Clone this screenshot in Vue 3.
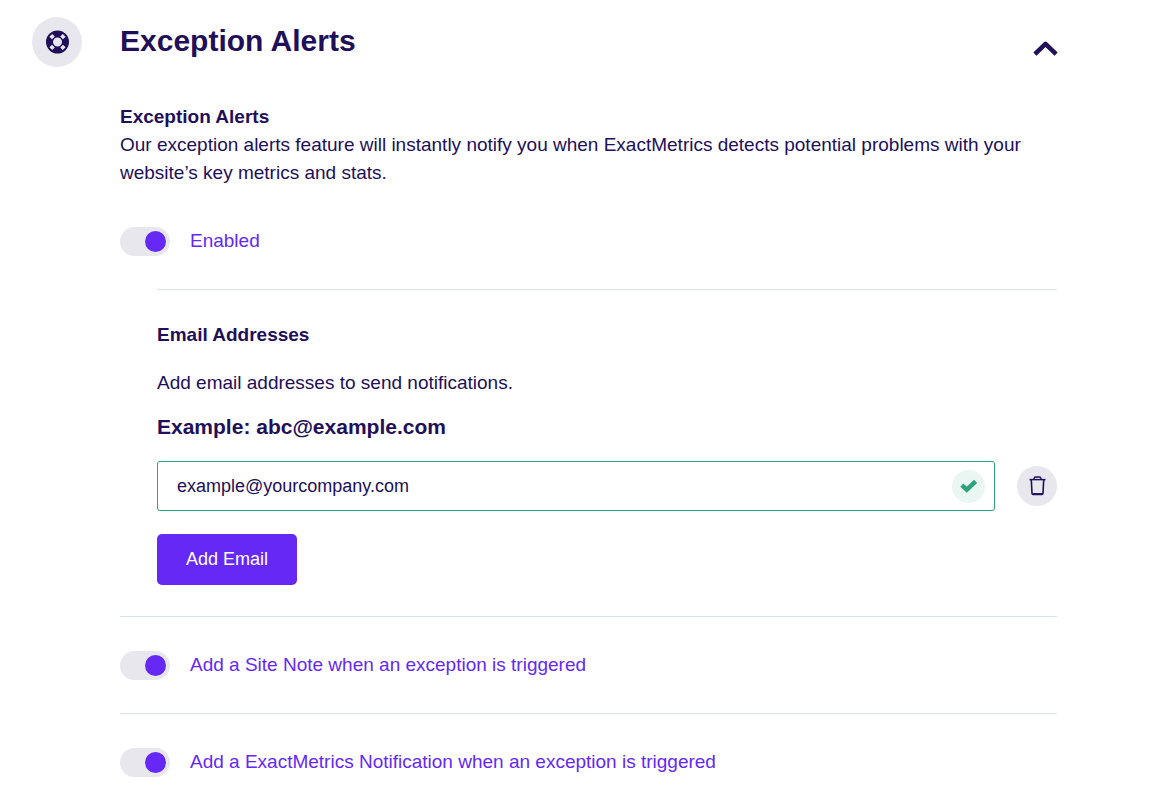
<script setup>
import { ref } from 'vue'

const open = ref(true)
const enabled = ref(true)
const emails = ref(['example@yourcompany.com'])
const extras = ref([
  { id: 'site-note', label: 'Add a Site Note when an exception is triggered', on: true },
  { id: 'notification', label: 'Add a ExactMetrics Notification when an exception is triggered', on: true },
])
</script>

<template>
  <main class="panel">
    <span class="badge">
      <svg width="24" height="24" viewBox="0 0 24 24" aria-hidden="true">
        <circle cx="12.5" cy="12" r="8" fill="none" stroke="#210f59" stroke-width="7" />
        <path d="M5.8 5.3l2.6 2.6M19.2 5.3l-2.6 2.6M5.8 18.7l2.6-2.6M19.2 18.7l-2.6-2.6" stroke="#e8e7ee" stroke-width="4" />
      </svg>
    </span>

    <div class="content">
      <header class="head">
        <h1>Exception Alerts</h1>
        <button class="collapse" type="button" aria-label="Toggle section" :aria-expanded="open" @click="open = !open">
          <svg width="26" height="18" viewBox="0 0 26 18" aria-hidden="true">
            <path d="M3.9 15.2L14.5 4.8L25.1 15.2" fill="none" stroke="#210f59" stroke-width="4.5" stroke-linejoin="round" />
          </svg>
        </button>
      </header>

      <div v-if="open">
        <h2>Exception Alerts</h2>
        <p class="intro">Our exception alerts feature will instantly notify you when ExactMetrics detects potential problems with your website’s key metrics and stats.</p>

        <label class="toggle" for="enabled">
          <input id="enabled" v-model="enabled" type="checkbox" role="switch" />
          <span>Enabled</span>
        </label>

        <section v-if="enabled" class="emails">
          <h2>Email Addresses</h2>
          <p class="hint">Add email addresses to send notifications.</p>
          <h3>Example: abc@example.com</h3>

          <div v-for="(email, i) in emails" :key="i" class="row">
            <div class="field">
              <input v-model="emails[i]" type="email" aria-label="Email address" />
              <span class="valid">
                <svg width="17" height="14" viewBox="0 0 17 14" aria-hidden="true">
                  <path d="M1.8 6.2l5 4.5L15.6 2.3" fill="none" stroke="#2ea27c" stroke-width="4.4" />
                </svg>
              </span>
            </div>
            <button class="remove" type="button" aria-label="Remove email" @click="emails.splice(i, 1)">
              <svg width="18" height="20" viewBox="0 0 18 20" fill="none" stroke="#210f59" aria-hidden="true">
                <path d="M1.5 3.6h16" stroke-width="1.5" />
                <path d="M5.8 3.5l.5-1.6q.3-.9 1.2-.9h4q.9 0 1.2.9l.5 1.6" stroke-width="1.4" />
                <path d="M3.3 4l.7 13.2q.1 1.2 1.1 1.2h8.8q1 0 1.1-1.2L15.7 4" stroke-width="1.6" />
                <path d="M4.5 18h10" stroke-width="1.8" />
              </svg>
            </button>
          </div>

          <button class="add" type="button" @click="emails.push('')">Add Email</button>
        </section>

        <div v-for="item in extras" :key="item.id" class="extra">
          <label class="toggle" :for="item.id">
            <input :id="item.id" v-model="item.on" type="checkbox" role="switch" />
            <span>{{ item.label }}</span>
          </label>
        </div>
      </div>
    </div>
  </main>
</template>

<style>
body {
  margin: 0;
  background: #fff;
}
</style>

<style scoped>
.panel {
  display: flex;
  align-items: flex-start;
  gap: 38px;
  padding: 17px 104px 0 32px;
  color: #210f59;
  font-family: "Liberation Sans", Arial, sans-serif;
  font-size: 19px;
  line-height: 28px;
}

.badge {
  display: flex;
  flex: none;
  align-items: center;
  justify-content: center;
  width: 50px;
  height: 50px;
  border-radius: 50%;
  background: #e8e7ee;
}

.content {
  flex: 1;
  min-width: 0;
}

h1,
h2,
h3,
p {
  margin: 0;
}

.head {
  display: flex;
  justify-content: space-between;
  margin-bottom: 38px;
}

h1 {
  font-size: 30px;
  line-height: 48px;
}

h2 {
  font-size: 19px;
  line-height: 28px;
}

h3 {
  margin-bottom: 20px;
  font-size: 21px;
  line-height: 28px;
}

button {
  padding: 0;
  border: 0;
  font-family: inherit;
  cursor: pointer;
}

svg {
  display: block;
  overflow: visible;
}

.collapse {
  align-self: flex-end;
  margin-bottom: 8px;
  background: none;
}

.intro {
  margin-bottom: 40px;
}

.toggle {
  display: flex;
  align-items: center;
  gap: 20px;
  color: #6528f5;
  cursor: pointer;
}

.toggle span {
  margin-bottom: 2px;
  line-height: 24px;
}

.toggle input {
  flex: none;
  width: 50px;
  height: 29px;
  margin: 0;
  padding: 4px;
  box-sizing: border-box;
  border-radius: 15px;
  background: #e8e7ee;
  appearance: none;
  cursor: pointer;
}

.toggle input::before {
  content: "";
  display: block;
  width: 21px;
  height: 21px;
  border-radius: 50%;
  background: #9a95b5;
}

.toggle input:checked::before {
  margin-left: auto;
  background: #6528f5;
}

.emails {
  margin: 33px 0 31px 37px;
  padding-top: 31px;
  border-top: 1px solid #d6e2ed;
}

.hint {
  margin: 20px 0 16px;
}

.row {
  display: flex;
  align-items: center;
  gap: 22px;
  margin-bottom: 23px;
}

.field {
  display: flex;
  flex: 1;
  align-items: center;
  height: 50px;
  padding: 0 9px 0 19px;
  box-sizing: border-box;
  border: 1px solid #2ea27c;
  border-radius: 3px;
}

.field input {
  flex: 1;
  min-width: 0;
  padding: 0;
  border: 0;
  outline: 0;
  background: none;
  color: inherit;
  font-family: inherit;
  font-size: 18px;
}

.valid,
.remove {
  display: flex;
  flex: none;
  align-items: center;
  justify-content: center;
  border-radius: 50%;
}

.valid {
  width: 33px;
  height: 33px;
  background: #eaf6f2;
}

.remove {
  width: 40px;
  height: 40px;
  background: #e8e7ee;
}

.add {
  display: block;
  height: 51px;
  padding: 0 29px;
  border-radius: 5px;
  background: #6528f5;
  color: #fff;
  font-size: 18px;
}

.extra {
  padding: 34px 0 33px;
  border-top: 1px solid #d6e2ed;
}
</style>
